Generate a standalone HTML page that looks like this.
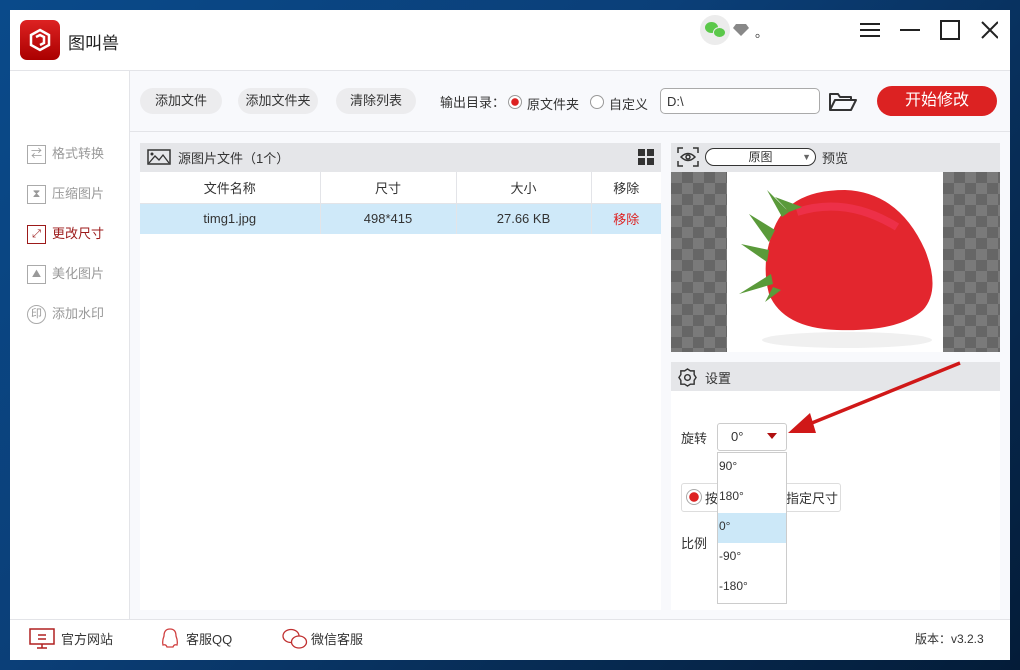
<!DOCTYPE html>
<html><head><meta charset="utf-8"><style>
*{margin:0;padding:0;box-sizing:border-box}
body{width:1020px;height:670px;overflow:hidden;background:linear-gradient(135deg,#0a4a8a 0%,#0b3f78 40%,#072c55 70%,#041c38 100%);font-family:"Liberation Sans","Noto Sans CJK SC",sans-serif;font-size:13px;color:#333;position:relative}
.a{position:absolute}
.win{left:10px;top:10px;width:1000px;height:650px;background:#fff}
.btn{background:#ececee;border-radius:13px;height:26px;line-height:26px;text-align:center;font-size:13px;color:#333}
.chk{background-color:#7a7a7a;background-image:linear-gradient(45deg,#666 25%,transparent 25%,transparent 75%,#666 75%),linear-gradient(45deg,#666 25%,transparent 25%,transparent 75%,#666 75%);background-size:22px 22px;background-position:0 0,11px 11px}
.side{left:27px;font-size:13px;color:#999;height:20px;line-height:20px}
.side i{display:inline-block;width:19px;height:19px;border:1px solid #aaa;vertical-align:middle;margin-right:6px;font-style:normal;font-size:11px;text-align:center;line-height:17px}
td{text-align:center}
</style></head><body>
<div class="a win"></div>
<!-- title -->
<div class="a" style="left:20px;top:20px;width:40px;height:40px;border-radius:7px;background:linear-gradient(#d22,#a00)"></div>
<svg class="a" style="left:28px;top:28px" width="24" height="24" viewBox="0 0 24 24"><path d="M12 2L21 7V17L12 22L3 17V7Z" fill="none" stroke="#fff" stroke-width="2.5"/><path d="M8 9L12 7L16 9V15L12 17" fill="none" stroke="#fff" stroke-width="2.5"/></svg>
<div class="a" style="left:68px;top:29px;font-size:17px;color:#222">图叫兽</div>
<div class="a" style="left:700px;top:15px;width:30px;height:30px;border-radius:50%;background:#ececec"></div>
<div class="a" style="left:705px;top:22px;width:13px;height:11px;border-radius:50%;background:#5bc84a"></div>
<div class="a" style="left:713px;top:27px;width:13px;height:11px;border-radius:50%;background:#5bc84a;border:1px solid #ececec"></div>
<svg class="a" style="left:733px;top:24px" width="16" height="12"><path d="M3 0H13L16 4L8 12L0 4Z" fill="#888"/></svg>
<div class="a" style="left:755px;top:22px;font-size:13px">。</div>
<svg class="a" style="left:858px;top:20px" width="140" height="22"><g stroke="#222" stroke-width="2" fill="none"><path d="M2 4H22M2 10H22M2 16H22"/><path d="M42 10H62"/><rect x="83" y="1" width="18" height="18"/><path d="M124 2L140 18M140 2L124 18"/></g></svg>
<div class="a" style="left:10px;top:70px;width:1000px;height:1px;background:#e3e4e8"></div>
<!-- sidebar -->
<div class="a" style="left:129px;top:71px;width:1px;height:548px;background:#e3e4e8"></div>
<div class="a side" style="top:144px"><i>⇄</i>格式转换</div>
<div class="a side" style="top:184px"><i>⧗</i>压缩图片</div>
<div class="a side" style="top:224px;color:#9c1a1a"><i style="border-color:#9c1a1a;color:#9c1a1a">⤢</i>更改尺寸</div>
<div class="a side" style="top:264px"><i>⛰</i>美化图片</div>
<div class="a side" style="top:304px"><i style="border-radius:50%">印</i>添加水印</div>
<!-- main bg -->
<div class="a" style="left:130px;top:71px;width:880px;height:548px;background:#f8f9fc"></div>
<div class="a" style="left:130px;top:131px;width:880px;height:1px;background:#e3e4e8"></div>
<div class="a btn" style="left:140px;top:88px;width:82px">添加文件</div>
<div class="a btn" style="left:238px;top:88px;width:80px">添加文件夹</div>
<div class="a btn" style="left:336px;top:88px;width:80px">清除列表</div>
<div class="a" style="left:440px;top:92px">输出目录：</div>
<div class="a" style="left:508px;top:95px;width:14px;height:14px;border-radius:50%;border:1px solid #999;background:radial-gradient(#d22 3.5px,#fff 4px)"></div>
<div class="a" style="left:527px;top:94px">原文件夹</div>
<div class="a" style="left:590px;top:95px;width:14px;height:14px;border-radius:50%;border:1px solid #999;background:#fff"></div>
<div class="a" style="left:609px;top:94px">自定义</div>
<div class="a" style="left:660px;top:88px;width:160px;height:26px;border:1px solid #aaa;border-radius:5px;background:#fff;padding:5px 6px">D:\</div>
<svg class="a" style="left:829px;top:92px" width="28" height="20"><path d="M1 18V2H9L11 5H22V8M1 18L6 8H27L22 18Z" fill="none" stroke="#333" stroke-width="2" stroke-linejoin="round"/></svg>
<div class="a" style="left:877px;top:86px;width:120px;height:30px;border-radius:15px;background:#dc2222;color:#fff;font-size:16px;text-align:center;line-height:30px">开始修改</div>
<!-- left panel -->
<div class="a" style="left:140px;top:143px;width:521px;height:467px;background:#fff"></div>
<div class="a" style="left:140px;top:143px;width:521px;height:29px;background:#e5e6e9"></div>
<svg class="a" style="left:147px;top:149px" width="24" height="16"><rect x="1" y="1" width="22" height="14" fill="none" stroke="#333" stroke-width="1.5"/><circle cx="5" cy="5" r="1.5" fill="#333"/><path d="M2 14L8 7L12 11L16 6L22 14" fill="none" stroke="#333" stroke-width="1.3"/></svg>
<div class="a" style="left:178px;top:148px">源图片文件（1个）</div>
<svg class="a" style="left:638px;top:149px" width="16" height="16"><g fill="#333"><rect width="7" height="7"/><rect x="9" width="7" height="7"/><rect y="9" width="7" height="7"/><rect x="9" y="9" width="7" height="7"/></g></svg>
<table class="a" style="left:140px;top:172px;width:521px;border-collapse:collapse;font-size:13px">
<tr style="height:31px;border-bottom:1px solid #e3e4e8"><td style="width:180px;border-right:1px solid #e3e4e8">文件名称</td><td style="width:136px;border-right:1px solid #e3e4e8">尺寸</td><td style="width:135px;border-right:1px solid #e3e4e8">大小</td><td>移除</td></tr>
<tr style="height:31px;background:#cfe9f9"><td style="border-right:1px solid #e3e4e8">timg1.jpg</td><td style="border-right:1px solid #e3e4e8">498*415</td><td style="border-right:1px solid #e3e4e8">27.66 KB</td><td style="color:#d22">移除</td></tr>
</table>
<!-- right panel -->
<div class="a" style="left:671px;top:143px;width:329px;height:29px;background:#e5e6e9"></div>
<svg class="a" style="left:677px;top:147px" width="22" height="20"><g fill="none" stroke="#333" stroke-width="1.5"><path d="M1 6V1H6M16 1H21V6M21 14V19H16M6 19H1V14"/><path d="M4 10Q11 3 18 10Q11 17 4 10Z"/><circle cx="11" cy="10" r="2"/></g></svg>
<div class="a" style="left:705px;top:148px;width:111px;height:18px;border:1px solid #333;border-radius:9px;background:#fff;font-size:12px;text-align:center;line-height:16px">原图<span style="position:absolute;right:4px;top:0;color:#666;font-size:9px">▼</span></div>
<div class="a" style="left:822px;top:148px">预览</div>
<div class="a chk" style="left:671px;top:172px;width:56px;height:180px"></div>
<div class="a" style="left:727px;top:172px;width:216px;height:180px;background:#fff"></div>
<div class="a chk" style="left:943px;top:172px;width:57px;height:180px"></div>
<svg class="a" style="left:727px;top:172px" width="216" height="180">
<ellipse cx="120" cy="168" rx="85" ry="8" fill="#f0f0f0"/>
<path d="M45 62Q58 18 118 18Q172 20 198 78Q214 118 196 138Q172 160 110 158Q56 156 42 122Q34 92 45 62Z" fill="#e3262e"/>
<path d="M70 40Q120 24 170 55" fill="none" stroke="#f47" stroke-width="8" opacity=".35"/>
<g fill="#5a9a3a"><path d="M48 58L22 42L42 70Z"/><path d="M42 78L14 72L40 90Z"/><path d="M44 102L12 122L46 112Z"/><path d="M55 45L40 18L62 40Z"/><path d="M62 40L48 25L75 35Z"/><path d="M46 115L38 130L54 118Z"/></g>
</svg>
<div class="a" style="left:671px;top:362px;width:329px;height:29px;background:#e5e6e9"></div>
<svg class="a" style="left:678px;top:368px" width="19" height="19" viewBox="0 0 20 20"><path d="M10 1L13 3L17 3L17 7L19 10L17 13L17 17L13 17L10 19L7 17L3 17L3 13L1 10L3 7L3 3L7 3Z" fill="none" stroke="#333" stroke-width="1.5"/><circle cx="10" cy="10" r="3" fill="none" stroke="#333" stroke-width="1.5"/></svg>
<div class="a" style="left:705px;top:368px">设置</div>
<div class="a" style="left:671px;top:391px;width:329px;height:219px;background:#fff"></div>
<div class="a" style="left:681px;top:428px">旋转</div>
<div class="a" style="left:717px;top:423px;width:70px;height:28px;border:1px solid #ccc;border-radius:3px;background:#fff;padding:5px 13px">0°</div>
<div class="a" style="left:767px;top:433px;width:0;height:0;border-left:5px solid transparent;border-right:5px solid transparent;border-top:6px solid #b01010"></div>
<div class="a" style="left:681px;top:483px;width:160px;height:29px;border:1px solid #ddd;border-radius:3px;background:#fff"></div>
<div class="a" style="left:686px;top:489px;width:16px;height:16px;border-radius:50%;border:1px solid #aaa;background:radial-gradient(#d22 4.5px,#fff 5px)"></div>
<div class="a" style="left:705px;top:488px">按</div>
<div class="a" style="left:786px;top:488px">指定尺寸</div>
<div class="a" style="left:681px;top:533px">比例</div>
<div class="a" style="left:717px;top:452px;width:70px;height:152px;border:1px solid #ccc;background:#fff;font-size:12px">
<div style="height:30px;padding:6px 0 0 1px">90°</div>
<div style="height:30px;padding:6px 0 0 1px">180°</div>
<div style="height:30px;padding:6px 0 0 1px;background:#cce8f8">0°</div>
<div style="height:30px;padding:6px 0 0 1px">-90°</div>
<div style="height:30px;padding:6px 0 0 1px">-180°</div>
</div>
<svg class="a" style="left:780px;top:355px" width="190" height="90"><path d="M180 8L22 72" stroke="#d01818" stroke-width="3.5"/><path d="M8 78L30 58L36 78Z" fill="#d01818"/></svg>
<!-- footer -->
<div class="a" style="left:10px;top:619px;width:1000px;height:1px;background:#e3e4e8"></div>
<svg class="a" style="left:29px;top:628px" width="26" height="22"><rect x="1" y="1" width="24" height="15" fill="none" stroke="#b02020" stroke-width="1.5"/><path d="M9 7H17M9 11H17M13 16V20M8 20H18" stroke="#b02020" stroke-width="1.5"/></svg>
<div class="a" style="left:61px;top:629px">官方网站</div>
<svg class="a" style="left:161px;top:627px" width="18" height="24"><path d="M9 2Q15 2 15 9Q17 14 16 18Q13 17 12 20H6Q5 17 2 18Q1 14 3 9Q3 2 9 2Z" fill="none" stroke="#d04040" stroke-width="1.3"/></svg>
<div class="a" style="left:186px;top:629px">客服QQ</div>
<svg class="a" style="left:282px;top:628px" width="26" height="22"><ellipse cx="9" cy="8" rx="8" ry="6.5" fill="none" stroke="#c03030" stroke-width="1.3"/><ellipse cx="17" cy="14" rx="7.5" ry="6" fill="#fff" stroke="#c03030" stroke-width="1.3"/></svg>
<div class="a" style="left:311px;top:629px">微信客服</div>
<div class="a" style="left:915px;top:630px;font-size:12px">版本：v3.2.3</div>
</body></html>
